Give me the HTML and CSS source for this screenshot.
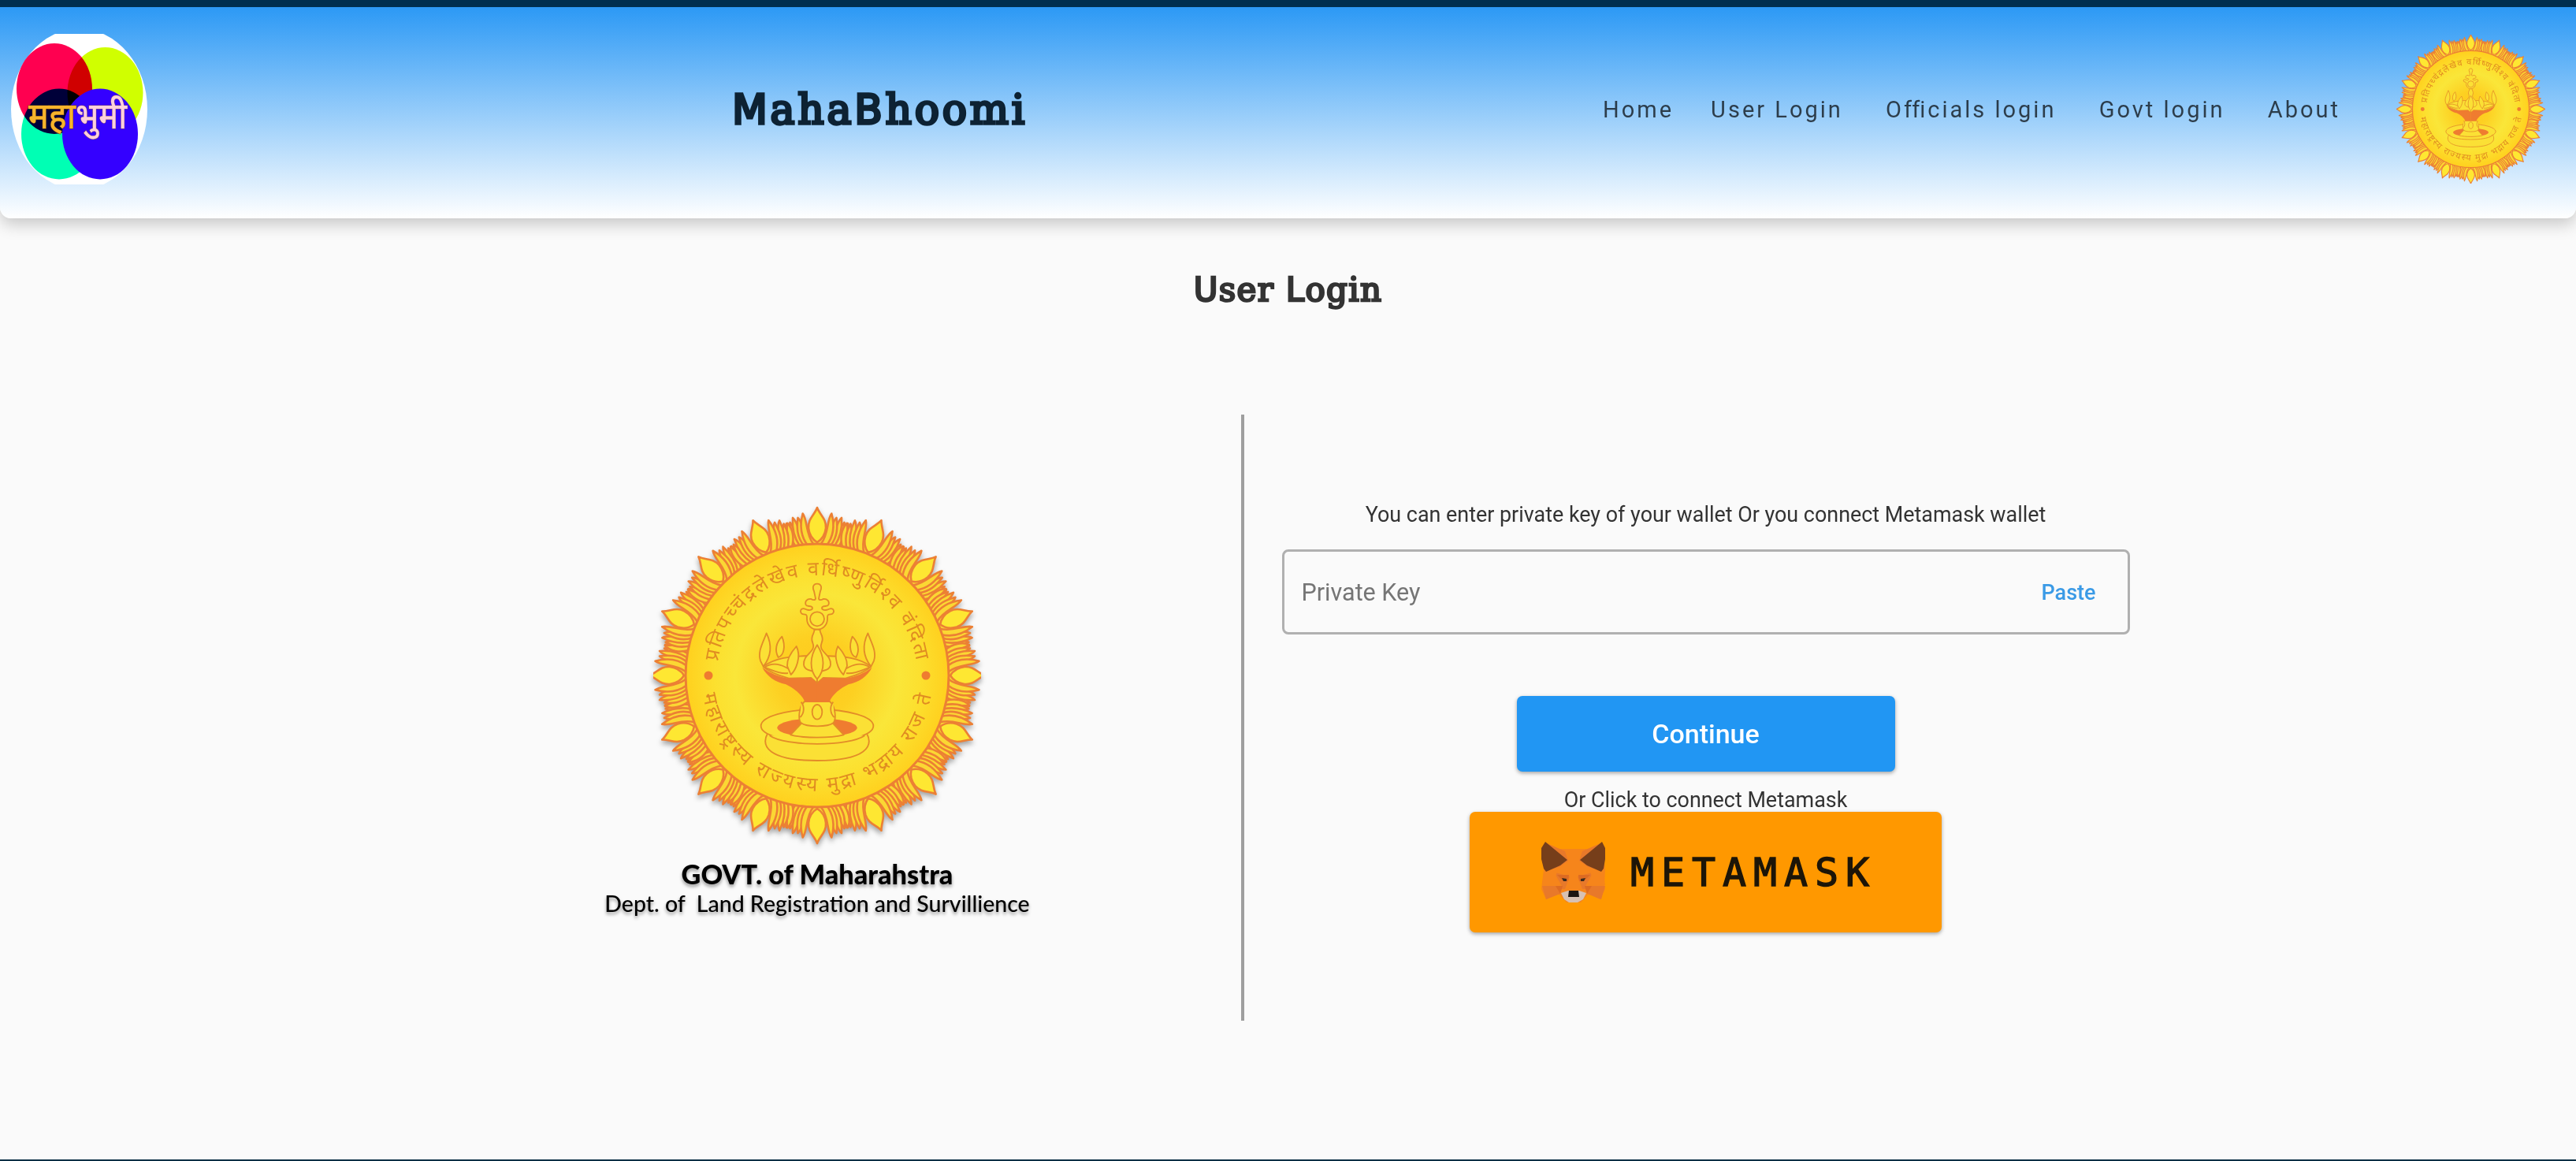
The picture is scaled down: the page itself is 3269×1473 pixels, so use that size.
FILE: index.html
```html
<!DOCTYPE html>
<html lang="en">
<head>
<meta charset="utf-8">
<title>MahaBhoomi</title>
<link rel="stylesheet" href="styles.css">
</head>
<body>
<svg class="defs" width="0" height="0" aria-hidden="true">
  <defs>
    <radialGradient id="disc">
      <stop offset="0" stop-color="#ffc81c"/>
      <stop offset=".3" stop-color="#fdd022"/>
      <stop offset=".62" stop-color="#fae639"/>
      <stop offset=".78" stop-color="#fce02f"/>
      <stop offset="1" stop-color="#ffd01e"/>
    </radialGradient>
    <path id="arc-top" d="M-125.8,-17.7 A127,127 0 0 1 125.4,-20"/>
    <path id="arc-bottom" d="M-145,24 A147,147 0 0 0 145,24"/>
    <g id="lotus-side">
      <path d="M22,-164 C33,-172 33,-184 39,-193 C43,-184 40,-172 33,-163Z"/>
      <path d="M18,-165 C29,-175 27,-186 34.500,-194 C36,-182 34,-174 27,-163Z"/>
      <path d="M13,-166 C25,-178 22,-192 31,-200 C32,-188 30,-176 22,-164Z"/>
      <path d="M9,-166 C20,-180 17,-194 24.500,-200 C26,-188 26,-176 17,-165Z"/>
      <path d="M5,-167 C15,-180 12,-197 18.300,-205.500 C22,-192 22,-178 12,-165Z"/>
    </g>
    <g id="lotus">
      <use href="#lotus-side"/>
      <use href="#lotus-side" transform="scale(-1,1)"/>
      <path class="bright" d="M0,-213 C3,-204 12,-199 11,-187 C10,-178 5,-172 0,-169 C-5,-172 -10,-178 -11,-187 C-12,-199 -3,-204 0,-213Z"/>
    </g>
    <g id="lamp-half">
      <path d="M351,122 C334,122 333,138 339,150 L345,178 C344,186 334,184 328,180 C312,178 303,190 308,202 C312,210 326,204 332,211 C336,220 325,223 318,222 C305,221 302,212 292,218 C284,226 289,238 300,238 C308,238 313,240 312,252 C311,280 330,296 351,296"/>
      <path d="M145,437 C190,405 240,396 351,396 L351,500 L328,480 L243,482 C200,470 165,455 145,437"/>
      <path d="M150,440 C185,418 215,430 243,446 M150,440 C190,455 215,466 240,462"/>
      <path d="M351,296 L340,297 C342,308 332,314 331,330 C329,345 340,350 336,364 C332,385 298,395 300,430 C302,448 325,456 351,455"/>
      <path d="M158,310 C143,350 124,380 135,415 L146,437 C175,400 180,355 158,310Z"/>
      <path d="M217,323 C195,345 188,375 203,402 C224,395 232,360 217,323Z"/>
      <path d="M272,360 C250,385 235,410 237,435 L251,468 C270,450 292,400 272,360Z"/>
      <path class="solid" d="M142,440 C170,462 205,476 240,482 L328,480 L352,500 L352,572 L305,572 C290,540 262,520 232,505 C190,495 160,475 142,440Z"/>
    </g>
    <g id="seal">
      <circle r="182" class="petals"/>
      <g class="petals">
        <use href="#lotus"/>
        <use href="#lotus" transform="rotate(22.5)"/>
        <use href="#lotus" transform="rotate(45)"/>
        <use href="#lotus" transform="rotate(67.5)"/>
        <use href="#lotus" transform="rotate(90)"/>
        <use href="#lotus" transform="rotate(112.5)"/>
        <use href="#lotus" transform="rotate(135)"/>
        <use href="#lotus" transform="rotate(157.5)"/>
        <use href="#lotus" transform="rotate(180)"/>
        <use href="#lotus" transform="rotate(202.5)"/>
        <use href="#lotus" transform="rotate(225)"/>
        <use href="#lotus" transform="rotate(247.5)"/>
        <use href="#lotus" transform="rotate(270)"/>
        <use href="#lotus" transform="rotate(292.5)"/>
        <use href="#lotus" transform="rotate(315)"/>
        <use href="#lotus" transform="rotate(337.5)"/>
      </g>
      <circle r="167" class="disc"/>
      <circle cx="-138" r="5.500" class="dot"/>
      <circle cx="138" r="5.500" class="dot"/>
      <g class="motto">
        <text textLength="362"><textPath href="#arc-top" textLength="362">प्रतिपच्चंद्रलेखेव वर्धिष्णुर्विश्व वंदिता</textPath></text>
        <text textLength="412"><textPath href="#arc-bottom" textLength="412">महाराष्ट्रस्य राज्यस्य मुद्रा भद्राय राज ते</textPath></text>
      </g>
      <g class="lamp" transform="translate(-117,-157) scale(.33333)">
        <path d="M163,690 C135,740 165,795 351,795 C537,795 567,740 539,690Z"/>
        <ellipse cx="351" cy="663" rx="214" ry="63"/>
        <path d="M170,700 C230,742 472,742 532,700"/>
        <ellipse class="solid" cx="351" cy="670" rx="152" ry="36"/>
        <path d="M292,652 L250,697 C300,710 400,710 452,697 L410,652Z"/>
        <path d="M303,570 C280,590 278,640 290,652 C310,668 392,668 412,652 C424,640 422,590 399,570Z"/>
        <path d="M290,572 C304,590 302,615 286,630 M412,572 C398,590 400,615 416,630"/>
        <ellipse cx="351" cy="610" rx="19" ry="28"/>
        <use href="#lamp-half"/>
        <use href="#lamp-half" transform="translate(702,0) scale(-1,1)"/>
        <circle cx="351" cy="256" r="27"/>
        <path d="M351,355 C322,400 320,450 351,485 C382,450 380,400 351,355Z"/>
      </g>
    </g>
  </defs>
</svg>

<header class="header">
  <svg class="logo" viewBox="14 43 173 191" role="img" aria-label="Mahabhoomi logo">
    <clipPath id="logo-clip"><rect x="14" y="43" width="173" height="191"/></clipPath>
    <g clip-path="url(#logo-clip)">
      <ellipse cx="100.500" cy="138.500" rx="86.500" ry="102" fill="#fff"/>
      <g class="blend">
        <ellipse cx="69" cy="112.500" rx="48" ry="57.500" fill="#ff0050"/>
        <ellipse cx="133.500" cy="117.500" rx="48" ry="57.500" fill="#d0ff00"/>
        <ellipse cx="75" cy="170" rx="48" ry="57.500" fill="#00ffb4"/>
      </g>
      <ellipse cx="127" cy="170" rx="48" ry="57.500" fill="#3400ff"/>
      <text class="logo-gold" x="36" y="163" textLength="60" lengthAdjust="spacingAndGlyphs">महा</text>
      <text class="logo-pink" x="96" y="163" textLength="65" lengthAdjust="spacingAndGlyphs">भुमी</text>
    </g>
  </svg>
  <h1 class="brand"><span class="cap">M</span>aha<span class="cap">B</span>hoomi</h1>
  <nav class="nav">
    <a class="home">Home</a><a class="link">User Login</a><a class="link">O<span class="liga">ff</span>icials login</a><a class="link">Govt login</a><a>About</a>
  </nav>
  <svg class="seal-small" viewBox="-213 -213 426 426" role="img" aria-label="Seal"><use href="#seal"/></svg>
</header>

<main class="main">
  <h2 class="page-title"><span class="cap">U</span>ser <span class="cap">L</span>ogin</h2>
  <div class="columns">
    <section class="govt">
      <svg class="seal-large" viewBox="-208 -215 416 430" role="img" aria-label="Seal of Maharashtra"><use href="#seal"/></svg>
      <div class="govt-name">GOVT. of Maharahstra</div>
      <div class="govt-dept">Dept. of&nbsp; Land Registration and Survillience</div>
    </section>
    <div class="divider"></div>
    <section class="login">
      <p class="hint">You can enter private key of your wallet Or you connect Metamask wallet</p>
      <div class="field"><span class="placeholder">Private Key</span><span class="paste">Paste</span></div>
      <div class="continue">Continue</div>
      <p class="or">Or Click to connect Metamask</p>
      <div class="metamask">
        <svg class="fox" viewBox="16 18 82 78" aria-hidden="true">
          <path fill="#f6851b" d="M21,19 L36,27 H78 L93,19 L97,53 L96,73 L97,78 L90,91 L76,84 L66,95 H48 L38,84 L22,91 L16,78 L19,53Z"/>
          <path fill="#e8792a" d="M21,19 L46,30 L50,42 L30,56 L52,62 L46,78 L42,78 L34,74 L17,74 L22,91 L40,84 L42,74 L34,60Z M93,19 L68,30 L64,42 L84,56 L62,62 L68,78 L72,78 L80,74 L97,74 L92,91 L74,84 L72,74 L80,60Z"/>
          <path fill="#f6851b" d="M20,56 L38,50 L34,62 L40,73 H17Z M94,56 L76,50 L80,62 L74,73 H97Z"/>
          <path fill="#dd6b22" d="M36,60 L51,60 L50,68 L42,66Z M78,60 L63,60 L64,68 L72,66Z M34,74 L43,74 L40,84Z M80,74 L71,74 L74,84Z"/>
          <path fill="#763e1a" d="M21,18 L49,41 L40,48 L31,52 L22,56 L19,52 L16,40 L16,26Z M93,18 L65,41 L74,48 L83,52 L92,56 L95,52 L97,40 L97,26Z"/>
          <path fill="#d7c1b3" d="M41,83 L50,80 H64 L73,83 L69,91 L62,95 H51 L45,91Z"/>
          <path fill="#1c1511" d="M51,80 H63 L64,88 H50Z"/>
          <path fill="#3a2a1c" d="M42,64 L48,65 V68 H44Z M72,64 L66,65 V68 H70Z"/>
        </svg>
        <span class="wordmark">METAMASK</span>
      </div>
    </section>
  </div>
</main>
</body>
</html>
```
FILE: styles.css
```css
* { box-sizing: border-box; }
body {
  margin: 0;
  height: 1473px;
  display: flex;
  flex-direction: column;
  overflow: hidden;
  background: #fafafa;
  border-top: 9px solid #002f50;
  border-bottom: 2px solid #0c2f45;
  font-family: Roboto, sans-serif;
  color: #333;
}
h1, h2, p { margin: 0; }
.defs { display: block; flex: none; height: 0; }

/* seal */
.petals { fill: #fbd733; stroke: #ec8034; stroke-width: 2.600; stroke-linejoin: round; }
.bright { fill: #fee732; }
.disc { fill: url(#disc); stroke: #ec8034; stroke-width: 3; }
.dot { fill: #ef7c30; }
.motto { fill: #e08c22; font: 400 25px "Noto Sans", sans-serif; }
.lamp { fill: #fbe035; stroke: #e38c28; stroke-width: 5.500; stroke-linejoin: round; }
.lamp .solid, .solid { fill: #ef7c30; stroke: none; }

.header {
  height: 268px;
  flex: none;
  display: flex;
  align-items: center;
  padding: 0 39px 10px 14px;
  border-radius: 0 0 14px 14px;
  background: linear-gradient(#2c99f5, #ffffff);
  box-shadow: 0 8px 20px rgba(0, 0, 0, .2);
}
.logo { width: 173px; height: 191px; flex: none; }
.blend { isolation: isolate; }
.blend ellipse { mix-blend-mode: multiply; }
.logo-gold, .logo-pink {
  font: 500 46px "Noto Sans", sans-serif;
  paint-order: stroke;
  stroke-width: 1px;
}
.logo-gold { fill: #f7b42c; stroke: #7a4a10; }
.logo-pink { fill: #ffd0dc; stroke: #8a5a60; }

.brand, .page-title {
  font-family: "DejaVu Serif", serif;
  font-weight: 400;
  white-space: nowrap;
  paint-order: stroke;
}
.cap { font-family: "DejaVu Sans", sans-serif; }
.brand {
  margin-left: 742px;
  padding-top: 2px;
  font-size: 52px;
  line-height: 60px;
  letter-spacing: 3.700px;
  color: #0d2233;
  -webkit-text-stroke: 3.400px #0d2233;
}
.nav {
  display: flex;
  margin-left: auto;
  padding-top: 2px;
  font-size: 29px;
  letter-spacing: 3px;
  color: rgba(0, 0, 0, .7);
  white-space: nowrap;
}
.home { margin-right: 47px; }
.link { margin-right: 54.300px; }
.liga { letter-spacing: 0; }
.seal-small { width: 189px; height: 189px; margin-left: 71px; flex: none; }

.main { flex: 1; display: flex; flex-direction: column; align-items: center; }
.page-title {
  margin-top: 61px;
  font-size: 42px;
  line-height: 60px;
  letter-spacing: 1.300px;
  color: #333;
  -webkit-text-stroke: 2.600px #333;
}
.columns { display: flex; align-self: stretch; margin-top: 128px; height: 769px; }
.govt {
  width: 1575px;
  padding: 116px 0 0 499px;
  display: flex;
  flex-direction: column;
  align-items: center;
  color: #000;
}
.seal-large { width: 416px; height: 430px; flex: none; filter: drop-shadow(0 4px 3px rgba(0, 0, 0, .35)); }
.govt-name, .govt-dept { font-family: Lato, sans-serif; text-shadow: 0 3px 4px rgba(0, 0, 0, .4); white-space: nowrap; }
.govt-name { margin-top: 17px; font-size: 34.300px; font-weight: 900; line-height: 40px; }
.govt-dept { font-size: 28.500px; font-weight: 500; line-height: 34px; }
.divider { width: 4px; background: #9e9e9e; flex: none; }
.login { width: 1171px; display: flex; flex-direction: column; align-items: center; }
.hint, .or { font-size: 26.900px; line-height: 32px; white-space: nowrap; }
.hint { margin-top: 111px; }
.field {
  width: 1076px;
  height: 108px;
  margin-top: 28px;
  padding: 0 40px 0 22px;
  display: flex;
  align-items: center;
  justify-content: space-between;
  border: 3px solid #b0b0b0;
  border-radius: 8px;
}
.placeholder { font-size: 30.500px; color: #757575; }
.paste { padding-top: 2px; font-size: 27px; font-weight: 500; color: #3a9ae6; }
.continue {
  width: 480px;
  height: 96px;
  margin-top: 78px;
  display: flex;
  align-items: center;
  justify-content: center;
  background: #2196f3;
  border-radius: 7px;
  box-shadow: 0 2px 5px rgba(0, 0, 0, .35);
  color: #fff;
  font-size: 34px;
  font-weight: 500;
}
.or { margin-top: 20px; margin-bottom: -1px; }
.metamask {
  width: 599px;
  height: 153px;
  display: flex;
  align-items: center;
  padding-left: 91px;
  background: #ff9800;
  border-radius: 7px;
  box-shadow: 0 2px 5px rgba(0, 0, 0, .35);
}
.fox { width: 82px; height: 78px; flex: none; }
.wordmark {
  margin-left: 31px;
  font-family: "DejaVu Sans Mono", monospace;
  font-size: 50px;
  letter-spacing: 8.900px;
  color: #1c1508;
  -webkit-text-stroke: 1.400px #1c1508;
}
```
